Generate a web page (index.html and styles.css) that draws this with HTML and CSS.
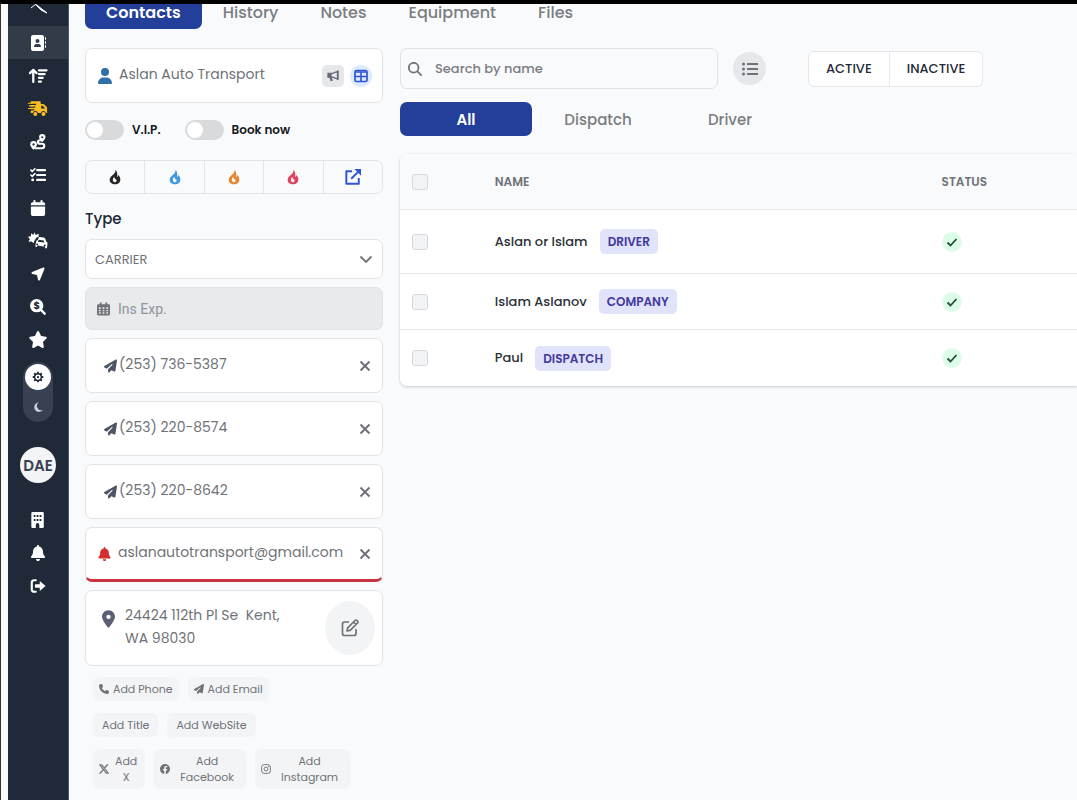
FILE: index.html
```html
<!DOCTYPE html>
<html lang="en">
<head>
    <meta charset="UTF-8">
    <meta name="viewport" content="width=device-width, initial-scale=1.0">
    <title>Aslan Auto Transport - Contacts</title>
    <link rel="stylesheet" href="styles.css">
</head>
<body>
    <!-- Icons used more than once -->
    <svg class="sprite" aria-hidden="true">
        <symbol id="plane" viewBox="0 0 512 512"><path d="M498.1 5.6c10.1 7 15.4 19.1 13.5 31.2l-64 416c-1.5 9.7-7.4 18.2-16 23s-18.9 5.4-28 1.6L284 427.7l-68.5 74.1c-8.9 9.7-22.9 12.9-35.2 8.1S160 493.2 160 480V396.4c0-4 1.5-7.8 4.2-10.7L331.8 202.8c5.8-6.3 5.6-16-.4-22s-15.7-6.4-22-.7L106 360.8 17.7 316.6C7.1 311.3 .3 300.7 0 288.9s5.9-22.8 16.1-28.7l448-256c10.7-6.1 23.9-5.5 34 1.4z"/></symbol>
        <symbol id="bell" viewBox="0 0 448 512"><path d="M224 0c-17.7 0-32 14.3-32 32V51.2C119 66 64 130.6 64 208v18.8c0 47-17.3 92.4-48.5 127.6l-7.4 8.3c-8.4 9.4-10.4 22.9-5.3 34.4S19.4 416 32 416H416c12.6 0 24-7.4 29.2-18.9s3.1-25-5.3-34.4l-7.4-8.3C401.3 319.2 384 273.9 384 226.8V208c0-77.4-55-142-128-156.8V32c0-17.7-14.3-32-32-32zm45.3 493.3c12-12 18.7-28.3 18.7-45.3H224 160c0 17 6.7 33.3 18.7 45.3s28.3 18.7 45.3 18.7s33.3-6.7 45.3-18.7z"/></symbol>
        <symbol id="flame" viewBox="0 0 24 24"><path fill-rule="evenodd" d="M12.5 1c.6 3.2-.6 4.8-2.6 6.8C7 10.5 4 12.5 4 16.2 4 20.5 7.6 23 12 23s8-2.7 8-7.3c0-2.7-1.2-4.9-3-6.700-.2 1.600-.8 2.700-1.900 3.400C16 8 15.500 3.600 12.500 1zM11 11.500c.2 2 .8 3 2.300 4 1.300.9 1.500 2.600.4 3.700-1.200 1.200-3.200 1-4.200-.3-1.500-2-.7-5 1.500-7.400z"/></symbol>
        <symbol id="close" viewBox="0 0 12 12"><path d="M1.5 1.5l9 9M10.5 1.5l-9 9" fill="none" stroke="currentColor" stroke-width="2"/></symbol>
        <symbol id="check" viewBox="0 0 12 12"><path d="M1.5 6.5l3 3 6-6.5" fill="none" stroke="currentColor" stroke-width="1.8"/></symbol>
    </svg>

    <div class="app">
        <aside class="sidebar">
            <a class="side-link logo" href="#" aria-label="Home">
                <svg viewBox="0 0 20 10"><path d="M3 4L8 0M7 0l3 2 9 7-6-3-5-5z" fill="currentColor" stroke="currentColor" stroke-width="1"/></svg>
            </a>
            <a class="side-link active" href="#" aria-label="Contacts">
                <svg viewBox="0 0 512 512"><path d="M96 0C60.7 0 32 28.7 32 64V448c0 35.3 28.7 64 64 64H384c35.3 0 64-28.7 64-64V64c0-35.3-28.7-64-64-64H96zM208 288h64c44.2 0 80 35.8 80 80c0 8.8-7.2 16-16 16H144c-8.8 0-16-7.2-16-16c0-44.2 35.8-80 80-80zm-32-96a64 64 0 1 1 128 0 64 64 0 1 1 -128 0zM512 80c0-8.8-7.2-16-16-16s-16 7.2-16 16v64c0 8.8 7.2 16 16 16s16-7.2 16-16V80zM496 192c-8.8 0-16 7.2-16 16v64c0 8.8 7.2 16 16 16s16-7.2 16-16V208c0-8.8-7.2-16-16-16zm16 144c0-8.8-7.2-16-16-16s-16 7.2-16 16v64c0 8.8 7.2 16 16 16s16-7.2 16-16V336z"/></svg>
            </a>
            <a class="side-link" href="#" aria-label="Priority">
                <svg class="wide" viewBox="0 0 20 18"><path d="M5 16V3M1.5 6.5L5 3l3.5 3.500M11 3.500h8M11 7.500h6M11 11.500h4M11 15.500h2" fill="none" stroke="currentColor" stroke-width="2.400" stroke-linecap="round" stroke-linejoin="round"/></svg>
            </a>
            <a class="side-link truck" href="#" aria-label="Shipments">
                <svg class="wide" viewBox="0 0 22 18"><path d="M3 1h10a1 1 0 0 1 1 1v2h2.500a2 2 0 0 1 1.400.6l2.500 2.500A2 2 0 0 1 21 8.500V14h-1.200a3 3 0 0 0-5.800 0h-3a3 3 0 0 0-5.800 0H3zM14.500 6v3H19l-3-3z" fill-rule="evenodd"/><circle cx="8" cy="15" r="2.200"/><circle cx="17" cy="15" r="2.200"/><path d="M0 4.500h9M0 7.500h8M0 10.500h7" stroke="#1f2937" stroke-width="1.200"/><path d="M0 3.300h5M1 6.100h5M0 9h5" stroke="currentColor" stroke-width="1.200"/></svg>
            </a>
            <a class="side-link" href="#" aria-label="Routes">
                <svg viewBox="0 0 18 18"><path d="M6 16h7.500a2.500 2.500 0 0 0 0-5H11a2 2 0 0 1 0-4h2" fill="none" stroke="currentColor" stroke-width="2.400" stroke-linecap="round"/><path fill-rule="evenodd" d="M13.800 0a3.600 3.600 0 0 1 3.600 3.600c0 2-3.600 5.400-3.600 5.400s-3.600-3.400-3.600-5.400A3.600 3.600 0 0 1 13.800 0zm0 2.400a1.200 1.200 0 1 0 0 2.400 1.200 1.200 0 0 0 0-2.400zM4 8a3.800 3.800 0 0 1 3.800 3.800C7.800 14 4 17.800 4 17.800S.2 14 .2 11.800A3.800 3.800 0 0 1 4 8zm0 2.500a1.300 1.300 0 1 0 0 2.600 1.300 1.300 0 0 0 0-2.600z"/></svg>
            </a>
            <a class="side-link" href="#" aria-label="Tasks">
                <svg viewBox="0 0 18 18"><path d="M8 3.500h9M8 9h9M8 14.500h9" stroke="currentColor" stroke-width="2.400" stroke-linecap="round"/><path d="M1 3.500l1.500 1.500L5.500 2M1 9l1.500 1.500 3-3" fill="none" stroke="currentColor" stroke-width="1.800" stroke-linecap="round"/><circle cx="3" cy="14.500" r="1.600"/></svg>
            </a>
            <a class="side-link" href="#" aria-label="Calendar">
                <svg viewBox="0 0 18 18"><path d="M5 0a1.200 1.200 0 0 1 1.200 1.200V2.500h5.600V1.200a1.200 1.200 0 0 1 2.400 0v1.300H15A2 2 0 0 1 17 4.500V6H1V4.500a2 2 0 0 1 2-2h.8V1.200A1.200 1.200 0 0 1 5 0zM1 7.200h16V16a2 2 0 0 1-2 2H3a2 2 0 0 1-2-2z"/></svg>
            </a>
            <a class="side-link" href="#" aria-label="Claims">
                <svg class="wide" viewBox="0 0 22 18"><path d="M7 0l1.500 3L12 1.500 11.500 5 9 6l-2 3.500L6 12l-2-2-3.500.5L2 7.500 0 5l3.200-.6L3.500 1 6 3z"/><path fill-rule="evenodd" d="M11 5l6 .8c1 .1 1.700.7 2.100 1.600l1 2.600c1 .5 1.500 1.300 1.400 2.400l-.5 4-.3 1.200-1.800-.2-.1-1.600-8.500-1.200-.4 1.500-1.800-.3.200-2 .6-3.500c.2-1 .8-1.600 1.700-1.800L12 6zm.8 3.300l-1 2 7.200 1-.8-2.400zM10 12.200a1 1 0 1 0 .1 0zm8.300 1.200a1 1 0 1 0 .1 0z"/></svg>
            </a>
            <a class="side-link" href="#" aria-label="Tracking">
                <svg viewBox="0 0 448 512"><path d="M429.6 92.1c4.900-11.900 2.100-25.600-7-34.700s-22.800-11.900-34.700-7l-352 144c-14.200 5.800-22.200 20.800-19.300 35.800s16.100 25.800 31.400 25.800L190 285 224 432c0 15.300 10.800 28.400 25.800 31.400s30-5.100 35.800-19.300l144-352z"/></svg>
            </a>
            <a class="side-link" href="#" aria-label="Rates">
                <svg viewBox="0 0 18 18"><circle cx="7.500" cy="7.500" r="7.500"/><path d="M12 12L16.500 16.500" stroke="currentColor" stroke-width="2.600" stroke-linecap="round"/><text x="7.500" y="11" class="dollar">$</text></svg>
            </a>
            <a class="side-link" href="#" aria-label="Favorites">
                <svg class="wide" viewBox="0 0 576 512"><path d="M316.9 18C311.6 7 300.4 0 288.1 0s-23.4 7-28.8 18L195 150.3 51.4 171.5c-12 1.8-22 10.2-25.7 21.7s-.7 24.2 7.9 32.7L137.8 329 113.2 474.7c-2 12 3 24.2 12.9 31.3s23 8 33.8 2.3l128.3-68.5 128.3 68.5c10.8 5.7 23.9 4.9 33.8-2.3s14.9-19.3 12.9-31.3L438.5 329 542.7 225.9c8.6-8.5 11.7-21.2 7.9-32.7s-13.7-19.9-25.7-21.7L381.2 150.3 316.9 18z"/></svg>
            </a>

            <div class="theme-switch">
                <button class="theme light" aria-label="Light theme">
                    <svg viewBox="0 0 16 16"><circle cx="8" cy="8" r="4.5" fill="none" stroke="currentColor" stroke-width="2"/><circle cx="8" cy="8" r="1.5"/><path d="M8 1v3M8 12v3M1 8h3M12 8h3M3 3l2 2M11 11l2 2M13 3l-2 2M5 11l-2 2" stroke="currentColor" stroke-width="2.4"/></svg>
                </button>
                <button class="theme" aria-label="Dark theme">
                    <svg viewBox="0 0 16 16"><path d="M9 2a6.2 6.2 0 1 0 5.5 9.500A5.500 5.500 0 0 1 9 2z"/></svg>
                </button>
            </div>

            <button class="avatar">DAE</button>

            <a class="side-link" href="#" aria-label="Company">
                <svg viewBox="0 0 18 18"><path fill-rule="evenodd" d="M3 0h11a1.500 1.500 0 0 1 1.500 1.500v15A1.500 1.500 0 0 1 14 18h-3.500v-3.500a2 2 0 0 0-4 0V18H3a1.500 1.500 0 0 1-1.500-1.500v-15A1.500 1.500 0 0 1 3 0zm1.200 3.500v2h2v-2zm3.300 0v2h2v-2zm3.300 0v2h2v-2zM4.200 8v2h2V8zm3.300 0v2h2V8zm3.300 0v2h2V8z"/></svg>
            </a>
            <a class="side-link" href="#" aria-label="Notifications"><svg><use href="#bell"/></svg></a>
            <a class="side-link" href="#" aria-label="Log out">
                <svg viewBox="0 0 18 18"><path d="M6.500 2.500H4.500A2.500 2.500 0 0 0 2 5v8a2.500 2.500 0 0 0 2.500 2.500h2" fill="none" stroke="currentColor" stroke-width="2.400" stroke-linecap="round"/><path d="M11 3.500l6.500 5.500-6.500 5.500v-3.500H6.500a1 1 0 0 1-1-1V8a1 1 0 0 1 1-1H11z"/></svg>
            </a>
        </aside>

        <main class="page">
            <nav class="tabs">
                <a class="tab active" href="#">Contacts</a>
                <a class="tab" href="#">History</a>
                <a class="tab" href="#">Notes</a>
                <a class="tab" href="#">Equipment</a>
                <a class="tab" href="#">Files</a>
            </nav>

            <div class="columns">
                <section class="details">
                    <div class="field">
                        <svg class="user-icon" viewBox="0 0 448 512"><path d="M224 256A128 128 0 1 0 224 0a128 128 0 1 0 0 256zm-45.7 48C79.8 304 0 383.8 0 482.3C0 498.7 13.3 512 29.7 512H418.3c16.4 0 29.7-13.3 29.7-29.7C448 383.8 368.2 304 269.7 304H178.3z"/></svg>
                        <input type="text" aria-label="Company name" value="Aslan Auto Transport">
                        <button class="chip" aria-label="Announce">
                            <svg viewBox="0 0 14 14"><path d="M2 4.500h4L11.500 2.500v7.500L6 8H2z" fill="none" stroke="currentColor" stroke-width="1.300"/><path d="M2 4h3.500v4.500H2zM3.500 8.500h2.500l.8 3.500H4.500z"/><path d="M12 1.500v9.500" stroke="currentColor" stroke-width="1.300"/></svg>
                        </button>
                        <button class="chip round" aria-label="Table view">
                            <svg viewBox="0 0 14 14"><rect x="1" y="1.500" width="12" height="11" rx="1.500" fill="none" stroke="currentColor" stroke-width="1.700"/><path d="M1 3h12M7 3v9.500M1 7.500h12" stroke="currentColor" stroke-width="1.600"/></svg>
                        </button>
                    </div>

                    <div class="switches">
                        <label class="switch"><input type="checkbox">V.I.P.</label>
                        <label class="switch"><input type="checkbox">Book now</label>
                    </div>

                    <div class="flames">
                        <button class="black" aria-label="Black"><svg><use href="#flame"/></svg></button>
                        <button class="blue" aria-label="Blue"><svg><use href="#flame"/></svg></button>
                        <button class="orange" aria-label="Orange"><svg><use href="#flame"/></svg></button>
                        <button class="red" aria-label="Red"><svg><use href="#flame"/></svg></button>
                        <button class="open" aria-label="Open">
                            <svg viewBox="0 0 18 18"><path d="M8 2.500H1.500v14H15.500V10M7 11L15 3" fill="none" stroke="currentColor" stroke-width="2.200" stroke-linejoin="round"/><path d="M10.500 0H18v7.500z"/></svg>
                        </button>
                    </div>

                    <label class="type-label" for="type">Type</label>
                    <div class="select-field">
                        <select id="type">
                            <option>CARRIER</option>
                        </select>
                        <svg viewBox="0 0 14 14"><path d="M1.500 4.500L7 10l5.500-5.500" fill="none" stroke="currentColor" stroke-width="1.800"/></svg>
                    </div>

                    <div class="ins-field">
                        <svg viewBox="0 0 14 14"><path fill-rule="evenodd" d="M3 0h2v2h4V0h2v2h1.500A1.500 1.500 0 0 1 14 3.500v9a1.500 1.500 0 0 1-1.500 1.500h-11A1.500 1.500 0 0 1 0 12.500v-9A1.500 1.500 0 0 1 1.500 2H3zM2 5v2h2V5zm4 0v2h2V5zm4 0v2h2V5zM2 8v1.500h2V8zm4 0v1.500h2V8zm4 0v1.500h2V8zM2 10.500V12h2v-1.500zm4 0V12h2v-1.500zm4 0V12h2v-1.500z"/></svg>
                        <input type="text" aria-label="Insurance expiration" placeholder="Ins Exp." disabled>
                    </div>

                    <div class="field phone">
                        <svg><use href="#plane"/></svg>
                        <input type="tel" aria-label="Phone 1" value="(253) 736-5387">
                        <button class="remove" aria-label="Remove phone"><svg><use href="#close"/></svg></button>
                    </div>
                    <div class="field phone">
                        <svg><use href="#plane"/></svg>
                        <input type="tel" aria-label="Phone 2" value="(253) 220-8574">
                        <button class="remove" aria-label="Remove phone"><svg><use href="#close"/></svg></button>
                    </div>
                    <div class="field phone">
                        <svg><use href="#plane"/></svg>
                        <input type="tel" aria-label="Phone 3" value="(253) 220-8642">
                        <button class="remove" aria-label="Remove phone"><svg><use href="#close"/></svg></button>
                    </div>
                    <div class="field email">
                        <svg><use href="#bell"/></svg>
                        <input type="email" aria-label="Email" value="aslanautotransport@gmail.com">
                        <button class="remove" aria-label="Remove email"><svg><use href="#close"/></svg></button>
                    </div>

                    <div class="address">
                        <svg class="pin" viewBox="0 0 384 512"><path d="M215.7 499.2C267 435 384 279.4 384 192C384 86 298 0 192 0S0 86 0 192c0 87.4 117 243 168.3 307.2c12.3 15.3 35.1 15.3 47.4 0zM192 128a64 64 0 1 1 0 128 64 64 0 1 1 0-128z"/></svg>
                        <textarea rows="2" aria-label="Address">24424 112th Pl Se  Kent,
WA 98030</textarea>
                        <button class="edit" aria-label="Edit address">
                            <svg viewBox="0 0 18 18"><path d="M8 3H3.500A2 2 0 0 0 1.500 5v9.500a2 2 0 0 0 2 2H13a2 2 0 0 0 2-2V10M6 12l.7-3.200L14 1.500a1.300 1.300 0 0 1 2 0l.5.500a1.300 1.300 0 0 1 0 2L9.200 11.300zM12.500 3l2.500 2.500" fill="none" stroke="currentColor" stroke-width="1.700" stroke-linejoin="round"/></svg>
                        </button>
                    </div>

                    <div class="add-buttons">
                        <div class="add-row">
                            <button><svg viewBox="0 0 512 512"><path d="M164.9 24.6c-7.7-18.6-28-28.5-47.4-23.2l-88 24C12.1 30.2 0 46 0 64C0 311.4 200.6 512 448 512c18 0 33.8-12.1 38.6-29.5l24-88c5.3-19.4-4.6-39.7-23.2-47.4l-96-40c-16.3-6.8-35.2-2.1-46.3 11.6L304.7 368C234.3 334.7 177.3 277.7 144 207.3L193.3 167c13.7-11.2 18.4-30 11.6-46.3l-40-96z"/></svg>Add Phone</button>
                            <button><svg><use href="#plane"/></svg>Add Email</button>
                        </div>
                        <div class="add-row plain">
                            <button>Add Title</button>
                            <button>Add WebSite</button>
                        </div>
                        <div class="add-row social">
                            <button><svg viewBox="0 0 16 16"><path d="M12.6.75h2.454l-5.36 6.142L16 15.25h-4.937l-3.867-5.07-4.425 5.07H.316l5.733-6.57L0 .75h5.063l3.495 4.633L12.601.75Zm-.86 13.028h1.36L4.323 2.145H2.865z" stroke="currentColor" stroke-width=".5"/></svg><span>Add<br>X</span></button>
                            <button><svg viewBox="0 0 16 16"><path d="M16 8.049c0-4.446-3.582-8.05-8-8.05C3.58 0-.002 3.603-.002 8.05c0 4.017 2.926 7.347 6.75 7.951v-5.625h-2.03V8.05H6.75V6.275c0-2.017 1.195-3.131 3.022-3.131.876 0 1.791.157 1.791.157v1.98h-1.009c-.993 0-1.303.621-1.303 1.258v1.51h2.218l-.354 2.326H9.25V16c3.824-.604 6.75-3.934 6.75-7.951"/></svg><span>Add<br>Facebook</span></button>
                            <button><svg viewBox="0 0 16 16"><rect x="1" y="1" width="14" height="14" rx="4" fill="none" stroke="currentColor" stroke-width="1.5"/><circle cx="8" cy="8" r="3.2" fill="none" stroke="currentColor" stroke-width="1.5"/><circle cx="12" cy="4" r="1"/></svg><span>Add<br>Instagram</span></button>
                        </div>
                    </div>
                </section>

                <section class="contacts">
                    <div class="toolbar">
                        <div class="search">
                            <svg viewBox="0 0 512 512"><path d="M416 208c0 45.9-14.9 88.3-40 122.7L502.6 457.4c12.5 12.5 12.5 32.8 0 45.3s-32.8 12.5-45.3 0L330.7 376c-34.4 25.2-76.8 40-122.7 40C93.1 416 0 322.9 0 208S93.1 0 208 0S416 93.1 416 208zM208 352a144 144 0 1 0 0-288 144 144 0 1 0 0 288z"/></svg>
                            <input type="text" aria-label="Search by name" placeholder="Search by name">
                        </div>
                        <button class="list-button" aria-label="List view">
                            <svg viewBox="0 0 16 14"><path d="M5 2h11M5 7h11M5 12h11" stroke="currentColor" stroke-width="1.8"/><circle cx="1.5" cy="2" r="1.5"/><circle cx="1.5" cy="7" r="1.5"/><circle cx="1.5" cy="12" r="1.5"/></svg>
                        </button>
                        <div class="status-filter">
                            <button>ACTIVE</button>
                            <button>INACTIVE</button>
                        </div>
                    </div>

                    <div class="role-tabs">
                        <button class="active">All</button>
                        <button>Dispatch</button>
                        <button>Driver</button>
                    </div>

                    <table>
                        <thead>
                            <tr>
                                <th class="col-check"><input type="checkbox" aria-label="Select all"></th>
                                <th class="col-name">NAME</th>
                                <th>STATUS</th>
                            </tr>
                        </thead>
                        <tbody>
                            <tr class="tall">
                                <td><input type="checkbox" aria-label="Select Aslan or Islam"></td>
                                <td><div class="person">Aslan or Islam <span class="badge">DRIVER</span></div></td>
                                <td><span class="ok"><svg><use href="#check"/></svg></span></td>
                            </tr>
                            <tr>
                                <td><input type="checkbox" aria-label="Select Islam Aslanov"></td>
                                <td><div class="person">Islam Aslanov <span class="badge">COMPANY</span></div></td>
                                <td><span class="ok"><svg><use href="#check"/></svg></span></td>
                            </tr>
                            <tr>
                                <td><input type="checkbox" aria-label="Select Paul"></td>
                                <td><div class="person">Paul <span class="badge">DISPATCH</span></div></td>
                                <td><span class="ok"><svg><use href="#check"/></svg></span></td>
                            </tr>
                        </tbody>
                    </table>
                </section>
            </div>
        </main>
    </div>
</body>
</html>
```
FILE: styles.css
```css
/* Global Styles */
* {
    box-sizing: border-box;
}

body {
    margin: 0;
    font-family: "Poppins", "Inter", sans-serif;
    font-size: 14px;
    color: #6f7378;
    background: #f9fafc;
    border-top: 4px solid #000;
}

button, input, select, textarea {
    font: inherit;
    color: inherit;
    margin: 0;
    padding: 0;
    border: none;
    background: none;
}

button {
    display: flex;
    align-items: center;
    justify-content: center;
    cursor: pointer;
}

a {
    color: inherit;
    text-decoration: none;
}

svg {
    display: block;
    flex: none;
    fill: currentColor;
}

.sprite {
    display: none;
}

.app {
    display: flex;
    min-height: calc(100vh - 4px);
    padding-left: 7px;
    border-left: 1px solid #3a3436;
}

/* Sidebar */
.sidebar {
    width: 61px;
    flex: none;
    display: flex;
    flex-direction: column;
    align-items: center;
    background: #1f2937;
    color: #fff;
    border-right: 1px solid #4b5563;
}

.side-link {
    width: 100%;
    height: 33px;
    display: flex;
    align-items: center;
    justify-content: center;
}

.side-link svg {
    width: 16px;
    height: 16px;
}

.side-link svg.wide {
    width: 20px;
    height: 17px;
}

.side-link.logo {
    height: 22px;
    align-items: flex-start;
    overflow: hidden;
}

.side-link.logo svg {
    width: 20px;
    height: 10px;
}

.side-link.active {
    background: #323b48;
}

.side-link.truck {
    color: #fbbf24;
}

.dollar {
    font-size: 11px;
    font-weight: 700;
    fill: #1f2937;
    text-anchor: middle;
}

.theme-switch {
    display: flex;
    flex-direction: column;
    align-items: center;
    gap: 4px;
    margin: 6px 0 25px;
    padding: 2px;
    border-radius: 15px;
    background: #374151;
}

.theme {
    width: 26px;
    height: 26px;
    border-radius: 50%;
    color: #d1d5db;
}

.theme svg {
    width: 12px;
    height: 12px;
}

.theme.light {
    background: #fff;
    color: #1f2937;
}

.avatar {
    width: 36px;
    height: 36px;
    margin-bottom: 20px;
    border-radius: 50%;
    background: #f3f4f6;
    color: #374151;
    font-size: 15px;
    font-weight: 600;
}

/* Page */
.page {
    flex: 1;
    min-width: 0;
    padding-left: 16px;
}

.tabs {
    display: flex;
    font-size: 16px;
    font-weight: 500;
}

.tab {
    height: 25px;
    padding: 0 21px;
    line-height: 17px;
    color: #7a7d82;
}

.tab.active {
    background: #233f99;
    color: #fff;
    font-weight: 600;
    border-radius: 0 0 7px 7px;
}

.columns {
    display: flex;
    gap: 17px;
    padding-top: 19px;
}

/* Details */
.details {
    width: 298px;
    flex: none;
    display: flex;
    flex-direction: column;
    gap: 8px;
}

.field, .address, .select-field, .ins-field {
    display: flex;
    align-items: center;
    border: 1px solid #e1e3e6;
    border-radius: 7px;
    background: #fff;
}

.field {
    height: 55px;
    padding: 0 10px 0 12px;
}

.field input {
    flex: 1;
    min-width: 0;
    margin-left: 7px;
    padding-bottom: 2px;
}

.user-icon {
    width: 14px;
    height: 16px;
    color: #2f6fa5;
}

.chip {
    width: 22px;
    height: 22px;
    margin-left: 6px;
    border-radius: 5px;
    background: #e5e7eb;
    color: #666b73;
}

.chip svg {
    width: 14px;
    height: 14px;
}

.chip.round {
    border-radius: 50%;
    background: #dbeafe;
    color: #2f55d4;
}

.switches {
    display: flex;
    gap: 24px;
    padding: 9px 0 12px;
}

.switch {
    display: flex;
    align-items: center;
    gap: 8px;
    font-size: 12px;
    font-weight: 600;
    color: #17191c;
}

.switch input {
    appearance: none;
    width: 39px;
    height: 20px;
    padding: 2px;
    border-radius: 10px;
    background: #d9dadc;
}

.switch input::before {
    content: "";
    display: block;
    width: 16px;
    height: 16px;
    border-radius: 50%;
    background: #fff;
}

.flames {
    display: flex;
    height: 34px;
    border: 1px solid #e1e3e6;
    border-radius: 7px;
}

.flames button {
    flex: 1;
}

.flames button + button {
    border-left: 1px solid #e3e5e8;
}

.flames svg {
    width: 16px;
    height: 16px;
}

.flames .black { color: #262626; }
.flames .blue { color: #4299e1; }
.flames .orange { color: #e5862f; }
.flames .red { color: #e53e5e; }
.flames .open { color: #2f55d4; }

.type-label {
    padding-top: 5px;
    line-height: 24px;
    font-size: 15px;
    font-weight: 500;
    color: #1f2937;
}

.select-field {
    height: 40px;
    padding: 0 9px;
}

.select-field select {
    appearance: none;
    flex: 1;
    font-size: 13px;
}

.select-field svg {
    width: 14px;
    height: 14px;
}

.ins-field {
    height: 43px;
    padding: 0 11px;
    gap: 8px;
    background: #e8eaec;
    font-family: "Roboto", sans-serif;
}

.ins-field svg {
    width: 13px;
    height: 14px;
}

.ins-field input {
    flex: 1;
}

.ins-field input::placeholder {
    color: #8e949c;
}

.field.phone {
    padding-left: 18px;
}

.field.phone input {
    margin-left: 2px;
}

.field.phone > svg {
    width: 13px;
    height: 14px;
    color: #4b5563;
}

.field.email {
    border-bottom: 3px solid #c93440;
}

.field.email > svg {
    width: 13px;
    height: 14px;
    color: #d32f2f;
}

.remove {
    width: 14px;
    height: 14px;
}

.remove svg {
    width: 12px;
    height: 12px;
}

.address {
    height: 76px;
    padding: 0 7px 0 16px;
}

.pin {
    width: 13px;
    height: 18px;
    margin-bottom: 18px;
    color: #5b6074;
}

.address textarea {
    flex: 1;
    min-width: 0;
    height: 48px;
    padding-bottom: 2px;
    margin-left: 10px;
    line-height: 23px;
    resize: none;
    overflow: hidden;
}

.edit {
    width: 50px;
    height: 54px;
    border-radius: 50%;
    background: #f3f4f6;
}

.edit svg {
    width: 18px;
    height: 18px;
}

/* Add buttons */
.add-buttons {
    display: flex;
    flex-direction: column;
    gap: 12px;
    padding: 3px 8px;
}

.add-row {
    display: flex;
    gap: 9px;
}

.add-row button {
    height: 24px;
    padding: 0 6px;
    gap: 4px;
    border-radius: 6px;
    background: #f3f4f6;
    font-size: 11px;
    line-height: 16px;
}

.add-row svg {
    width: 10px;
    height: 10px;
}

.add-row.plain button {
    padding: 0 9px;
}

.add-row.social button {
    height: 40px;
    padding: 0 12px 0 6px;
    gap: 10px;
}

.add-row.social button:first-child {
    padding-right: 8px;
    gap: 6px;
}

/* Contacts list */
.contacts {
    flex: 1;
    min-width: 0;
}

.toolbar {
    display: flex;
    align-items: center;
}

.search {
    flex: 0 1 318px;
    display: flex;
    align-items: center;
    height: 41px;
    padding: 0 7px;
    gap: 13px;
    border: 1px solid #dfe1e5;
    border-radius: 7px;
    font-size: 13px;
    font-weight: 500;
}

.search svg {
    width: 14px;
    height: 14px;
}

.search input {
    flex: 1;
    min-width: 0;
}

.search input::placeholder {
    color: #7a7d82;
}

.list-button {
    width: 33px;
    height: 33px;
    margin: 0 42px 0 15px;
    border-radius: 50%;
    background: #e5e7eb;
}

.list-button svg {
    width: 16px;
    height: 14px;
}

.status-filter {
    display: flex;
    height: 36px;
    border: 1px solid #e5e7eb;
    border-radius: 6px;
    background: #fff;
    font-size: 13px;
    font-weight: 500;
    color: #1f2937;
}

.status-filter button {
    padding: 0 17px;
}

.status-filter button + button {
    border-left: 1px solid #e5e7eb;
}

.role-tabs {
    display: flex;
    margin: 13px 0 18px;
}

.role-tabs button {
    width: 132px;
    height: 34px;
    border-radius: 7px;
    font-size: 15px;
    font-weight: 500;
    color: #7a7d82;
}

.role-tabs .active {
    background: #233f99;
    color: #fff;
    font-weight: 600;
}

/* Table */
table {
    width: 100%;
    table-layout: fixed;
    border-collapse: separate;
    border-spacing: 0;
    border-radius: 7px 0 0 7px;
    background: #fff;
    box-shadow: 0 1px 3px rgba(0, 0, 0, 0.2);
    overflow: hidden;
}

th, td {
    height: 56px;
    padding: 0;
    text-align: left;
    border-bottom: 1px solid #e5e7eb;
}

th {
    background: #f9fafc;
    font-size: 12px;
    font-weight: 600;
}

.tall td {
    height: 64px;
}

tbody tr:last-child td {
    border-bottom: none;
}

.col-check {
    width: 14%;
}

.col-name {
    width: 66%;
}

table input {
    appearance: none;
    display: block;
    width: 16px;
    height: 16px;
    margin-left: 12px;
    border: 1px solid #d5d7da;
    border-radius: 3px;
    background: #f3f4f6;
}

.person {
    display: flex;
    align-items: center;
    gap: 12px;
    font-size: 13px;
    font-weight: 500;
    color: #2b3038;
}

.badge {
    padding: 0 8px;
    line-height: 25px;
    border-radius: 5px;
    background: #e0e3fa;
    color: #42389d;
    font-size: 12px;
    font-weight: 600;
}

.ok {
    width: 20px;
    height: 20px;
    display: flex;
    align-items: center;
    justify-content: center;
    border-radius: 50%;
    background: #dcfce7;
    color: #1c5236;
}

.ok svg {
    width: 12px;
    height: 12px;
}
```
